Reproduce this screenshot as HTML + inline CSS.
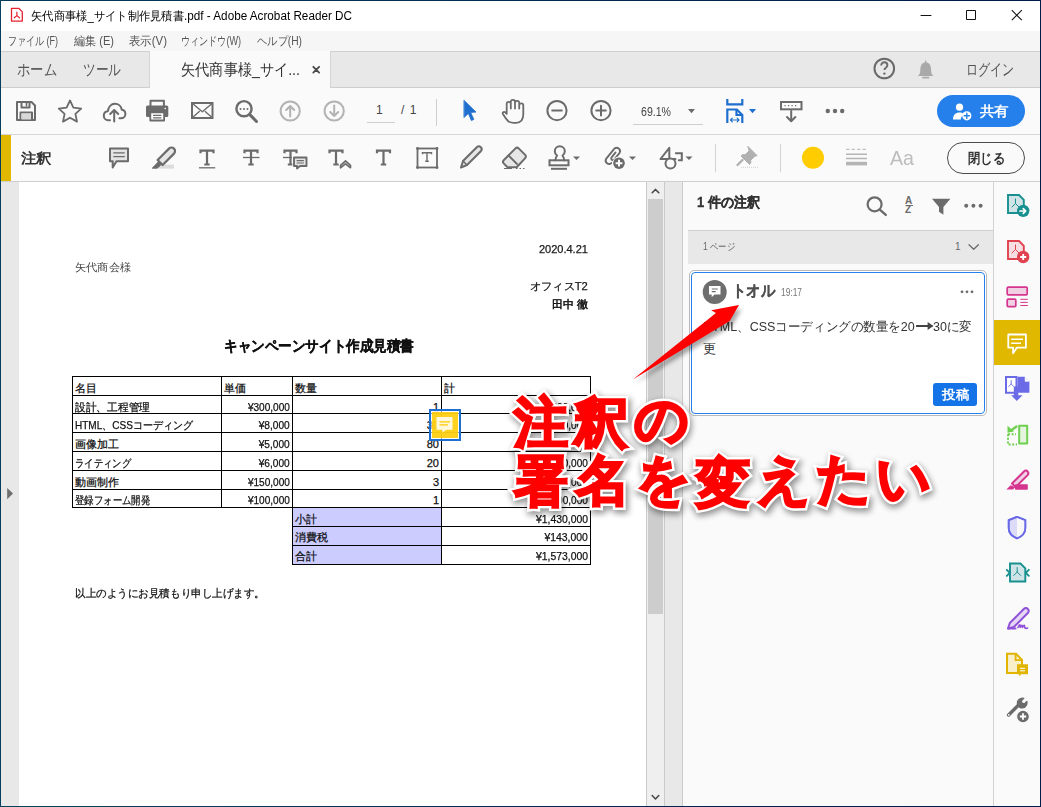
<!DOCTYPE html>
<html><head><meta charset="utf-8">
<style>
*{box-sizing:border-box;margin:0;padding:0}
html,body{width:1041px;height:807px;overflow:hidden;background:#fff}
body{position:relative;font-family:"Liberation Sans",sans-serif;color:#222}
.a{position:absolute;white-space:nowrap;line-height:1}
.b{position:absolute}
#ov{position:absolute;left:0;top:0;z-index:10}
.menu{font-size:12px;color:#555;top:35px}
.tabt{font-size:16px;color:#555;top:62px}
.doc{font-size:11px;color:#111;-webkit-text-stroke:0.25px #111}
.tl{position:absolute;background:#000}
.rt{position:absolute;white-space:nowrap;line-height:1;font-size:54px;font-weight:normal;-webkit-text-stroke-linejoin:round}
</style></head><body>

<!-- ============ backgrounds ============ -->
<div class="b" style="left:0;top:0;width:1041px;height:31px;background:#fff"></div>
<div class="b" style="left:0;top:31px;width:1041px;height:20px;background:#f6f6f6"></div>
<div class="b" style="left:0;top:51px;width:1041px;height:1px;background:#cfcfcf"></div>
<div class="b" style="left:0;top:52px;width:1041px;height:35px;background:#e8e8e8"></div>
<div class="b" style="left:0;top:87px;width:1041px;height:1px;background:#cdcdcd"></div>
<div class="b" style="left:0;top:88px;width:1041px;height:46px;background:#fafafa"></div>
<div class="b" style="left:0;top:134px;width:1041px;height:1px;background:#d6d6d6"></div>
<div class="b" style="left:0;top:135px;width:1041px;height:46px;background:#fafafa"></div>
<div class="b" style="left:0;top:181px;width:1041px;height:1px;background:#cfcfcf"></div>
<!-- active tab -->
<div class="b" style="left:149px;top:51px;width:182px;height:37px;background:#fafafa;border-left:1px solid #d4d4d4;border-right:1px solid #d4d4d4"></div>
<!-- yellow comment bar -->
<div class="b" style="left:1px;top:135px;width:10px;height:46px;background:#e0b800"></div>

<!-- doc area -->
<div class="b" style="left:0;top:182px;width:19px;height:625px;background:#e8e8e8"></div>
<div class="b" style="left:19px;top:182px;width:627px;height:625px;background:#fff"></div>
<div class="b" style="left:646px;top:182px;width:1px;height:625px;background:#cacaca"></div>
<div class="b" style="left:647px;top:182px;width:17px;height:625px;background:#efefef"></div>
<div class="b" style="left:648px;top:199px;width:15px;height:415px;background:#cdcdcd"></div>
<div class="b" style="left:664px;top:182px;width:1px;height:625px;background:#cacaca"></div>
<div class="b" style="left:665px;top:182px;width:17px;height:625px;background:#e8e8e8"></div>
<div class="b" style="left:682px;top:182px;width:1px;height:625px;background:#cacaca"></div>
<div class="b" style="left:683px;top:182px;width:310px;height:625px;background:#fafafa"></div>
<div class="b" style="left:993px;top:182px;width:1px;height:625px;background:#d2d2d2"></div>
<div class="b" style="left:994px;top:182px;width:47px;height:625px;background:#fafafa"></div>
<div class="b" style="left:994px;top:320px;width:46px;height:45px;background:#e0b800"></div>

<!-- comments panel -->
<div class="b" style="left:688px;top:230px;width:305px;height:1px;background:#cfcfcf"></div>
<div class="b" style="left:688px;top:231px;width:305px;height:33px;background:#e8e8e8"></div>
<div class="b" style="left:689px;top:270px;width:298px;height:146px;border:1px solid #bababa;border-radius:5px;background:#fff"></div>
<div class="b" style="left:691px;top:272px;width:294px;height:142px;border:1px solid #2680eb;border-radius:4px;background:#fff"></div>
<div class="b" style="left:933px;top:383px;width:44px;height:23px;border-radius:3px;background:#1473e6"></div>

<!-- buttons -->
<div class="b" style="left:937px;top:95px;width:88px;height:32px;border-radius:16px;background:#2680eb"></div>
<div class="b" style="left:947px;top:142px;width:78px;height:32px;border-radius:16px;border:1px solid #4b4b4b;background:#fafafa"></div>

<!-- ============ texts ============ -->
<div class="a" style="left: 30.5px; top: 10px; font-size: 12px; color: rgb(0, 0, 0); transform: scaleX(0.9405); transform-origin: left top;">矢代商事様_サイト制作見積書</div><div class="a" style="left: 184px; top: 10px; font-size: 12.5px; color: rgb(0, 0, 0); transform: scaleX(0.9371); transform-origin: left top;">.pdf - Adobe Acrobat Reader DC</div>
<div class="a menu" style="left: 8px; transform: scaleX(0.7501); transform-origin: left top;">ファイル (F)</div>
<div class="a menu" style="left: 73.5px; transform: scaleX(0.9229); transform-origin: left top;">編集 (E)</div>
<div class="a menu" style="left: 128.5px; transform: scaleX(0.95); transform-origin: left top;">表示(V)</div>
<div class="a menu" style="left: 181px; transform: scaleX(0.7564); transform-origin: left top;">ウィンドウ(W)</div>
<div class="a menu" style="left: 256.5px; transform: scaleX(0.8543); transform-origin: left top;">ヘルプ(H)</div>

<div class="a tabt" style="left: 16.5px; transform: scaleX(0.8333); transform-origin: left top;">ホーム</div>
<div class="a tabt" style="left: 82.5px; transform: scaleX(0.7917); transform-origin: left top;">ツール</div>
<div class="a tabt" style="left: 180.5px; color: rgb(51, 51, 51); transform: scaleX(0.8865); transform-origin: left top;">矢代商事様_サイ...</div>
<div class="a" style="left: 966px; top: 62px; font-size: 16px; color: rgb(85, 85, 85); transform: scaleX(0.75); transform-origin: left top;">ログイン</div>

<div class="a" style="left:376px;top:104px;font-size:12px;color:#444">1</div>
<div class="a" style="left:401px;top:104px;font-size:12px;color:#444;word-spacing:2px">/ 1</div>
<div class="a" style="left: 641px; top: 105.5px; font-size: 12px; color: rgb(68, 68, 68); transform: scaleX(0.8815); transform-origin: left top;">69.1%</div>
<div class="a" style="left: 979.5px; top: 104px; font-size: 14px; font-weight: bold; color: rgb(255, 255, 255); transform: scaleX(1.0357); transform-origin: left top;">共有</div>

<div class="a" style="left: 21px; top: 151px; font-size: 14px; font-weight: bold; color: rgb(51, 51, 51); transform: scaleX(1.1071); transform-origin: left top;">注釈</div>
<div class="a" style="left: 889.5px; top: 147px; font-size: 21px; color: rgb(189, 189, 189); transform: scaleX(0.9343); transform-origin: left top;">Aa</div>
<div class="a" style="left: 968px; top: 151px; font-size: 14px; font-weight: bold; color: rgb(51, 51, 51); transform: scaleX(0.881); transform-origin: left top;">閉じる</div>

<!-- panel texts -->
<div class="a" style="left: 696.5px; top: 195px; font-size: 14px; font-weight: bold; color: rgb(51, 51, 51); -webkit-text-stroke: 0.3px rgb(51, 51, 51); transform: scaleX(0.9307); transform-origin: left top;">1 件の注釈</div>
<div class="a" style="left: 703px; top: 242px; font-size: 10px; color: rgb(102, 102, 102); transform: scaleX(0.8346); transform-origin: left top;">1 ページ</div>
<div class="a" style="left:955px;top:242px;font-size:10px;color:#666">1</div>
<div class="a" style="left: 732px; top: 283px; font-size: 16px; font-weight: bold; color: rgb(80, 80, 80); -webkit-text-stroke: 0.2px rgb(80, 80, 80); transform: scaleX(0.8958); transform-origin: left top;">トオル</div>
<div class="a" style="left: 781px; top: 288px; font-size: 10px; color: rgb(119, 119, 119); transform: scaleX(0.839); transform-origin: left top;">19:17</div>
<div class="a" style="left: 703px; top: 320px; font-size: 13px; color: rgb(51, 51, 51); transform: scaleX(0.964); transform-origin: left top;">HTML、CSSコーディングの数量を20<span style="display:inline-block;width:17px;height:2px;background:#444;vertical-align:4px;margin:0 1px;position:relative"><span style="position:absolute;right:-1px;top:-3px;border-left:6px solid #444;border-top:4px solid transparent;border-bottom:4px solid transparent"></span></span>30に変</div>
<div class="a" style="left: 703px; top: 342px; font-size: 13px; color: rgb(51, 51, 51); transform: scaleX(1); transform-origin: left top;">更</div>
<div class="a" style="left: 942px; top: 388px; font-size: 13px; font-weight: bold; color: rgb(255, 255, 255); transform: scaleX(1.0385); transform-origin: left top;">投稿</div>

<!-- ============ document ============ -->
<div class="a doc r" style="right: 453px; top: 244px; color: rgb(34, 34, 34); transform: scaleX(1.0013); transform-origin: right top;">2020.4.21</div>
<div class="a doc" style="left: 75px; top: 262px; color: rgb(68, 68, 68); -webkit-text-stroke: 0px; transform: scaleX(1.0182); transform-origin: left top;">矢代商会様</div>
<div class="a doc r" style="right: 453px; top: 281px; color: rgb(34, 34, 34); transform: scaleX(1.0203); transform-origin: right top;">オフィスT2</div>
<div class="a doc r" style="right: 453px; top: 299px; color: rgb(17, 17, 17); -webkit-text-stroke: 0.5px rgb(17, 17, 17); transform: scaleX(0.9983); transform-origin: right top;">田中 徹</div>
<div class="a" style="left: 223.5px; top: 338px; font-size: 15px; font-weight: bold; color: rgb(17, 17, 17); -webkit-text-stroke: 0.3px rgb(17, 17, 17); transform: scaleX(0.9048); transform-origin: left top;">キャンペーンサイト作成見積書</div>

<!-- table lines -->
<div class="tl" style="left:72px;top:376px;width:519px;height:1px"></div>
<div class="tl" style="left:72px;top:395px;width:519px;height:1px"></div>
<div class="tl" style="left:72px;top:413px;width:519px;height:1px"></div>
<div class="tl" style="left:72px;top:432px;width:519px;height:1px"></div>
<div class="tl" style="left:72px;top:451px;width:519px;height:1px"></div>
<div class="tl" style="left:72px;top:470px;width:519px;height:1px"></div>
<div class="tl" style="left:72px;top:489px;width:519px;height:1px"></div>
<div class="tl" style="left:72px;top:507px;width:519px;height:1px"></div>
<div class="b" style="left:293px;top:508px;width:148px;height:18px;background:#ccccff"></div>
<div class="b" style="left:293px;top:527px;width:148px;height:18px;background:#ccccff"></div>
<div class="b" style="left:293px;top:546px;width:148px;height:18px;background:#ccccff"></div>
<div class="tl" style="left:292px;top:526px;width:299px;height:1px"></div>
<div class="tl" style="left:292px;top:545px;width:299px;height:1px"></div>
<div class="tl" style="left:292px;top:564px;width:299px;height:1px"></div>
<div class="tl" style="left:72px;top:376px;width:1px;height:132px"></div>
<div class="tl" style="left:221px;top:376px;width:1px;height:132px"></div>
<div class="tl" style="left:292px;top:376px;width:1px;height:189px"></div>
<div class="tl" style="left:441px;top:376px;width:1px;height:189px"></div>
<div class="tl" style="left:590px;top:376px;width:1px;height:189px"></div>

<!-- table text -->
<div class="a doc" style="left:75px;top:383px">名目</div>
<div class="a doc" style="left:224px;top:383px">単価</div>
<div class="a doc" style="left:295px;top:383px">数量</div>
<div class="a doc" style="left:444px;top:383px">計</div>

<div class="a doc" style="left: 75px; top: 402px; transform: scaleX(0.974); transform-origin: left top;">設計、工程管理</div>
<div class="a doc" style="left: 75px; top: 420px; transform: scaleX(0.9108); transform-origin: left top;">HTML、CSSコーディング</div>
<div class="a doc" style="left: 75px; top: 439px; transform: scaleX(1); transform-origin: left top;">画像加工</div>
<div class="a doc" style="left: 75px; top: 458px; transform: scaleX(0.8485); transform-origin: left top;">ライティング</div>
<div class="a doc" style="left: 75px; top: 477px; transform: scaleX(1); transform-origin: left top;">動画制作</div>
<div class="a doc" style="left: 75px; top: 495px; transform: scaleX(0.8523); transform-origin: left top;">登録フォーム開発</div>

<div class="a doc r" style="right: 751px; top: 402px; transform: scaleX(0.9152); transform-origin: right top;">¥300,000</div>
<div class="a doc r" style="right: 751px; top: 420px; transform: scaleX(0.9211); transform-origin: right top;">¥8,000</div>
<div class="a doc r" style="right: 751px; top: 439px; transform: scaleX(0.9211); transform-origin: right top;">¥5,000</div>
<div class="a doc r" style="right: 751px; top: 458px; transform: scaleX(0.9211); transform-origin: right top;">¥6,000</div>
<div class="a doc r" style="right: 751px; top: 477px; transform: scaleX(0.9152); transform-origin: right top;">¥150,000</div>
<div class="a doc r" style="right: 751px; top: 495px; transform: scaleX(0.9152); transform-origin: right top;">¥100,000</div>

<div class="a doc r" style="right:602px;top:402px">1</div>
<div class="a doc r" style="right:602px;top:420px">30</div>
<div class="a doc r" style="right:602px;top:439px">80</div>
<div class="a doc r" style="right:602px;top:458px">20</div>
<div class="a doc r" style="right:602px;top:477px">3</div>
<div class="a doc r" style="right:602px;top:495px">1</div>

<div class="a doc r" style="right: 453px; top: 402px; transform: scaleX(0.9152); transform-origin: right top;">¥300,000</div>
<div class="a doc r" style="right: 453px; top: 420px; transform: scaleX(0.9152); transform-origin: right top;">¥240,000</div>
<div class="a doc r" style="right: 453px; top: 439px; transform: scaleX(0.9152); transform-origin: right top;">¥400,000</div>
<div class="a doc r" style="right: 453px; top: 458px; transform: scaleX(0.9152); transform-origin: right top;">¥120,000</div>
<div class="a doc r" style="right: 453px; top: 477px; transform: scaleX(0.9152); transform-origin: right top;">¥450,000</div>
<div class="a doc r" style="right: 453px; top: 495px; transform: scaleX(0.9152); transform-origin: right top;">¥100,000</div>

<div class="a doc" style="left:295px;top:514px">小計</div>
<div class="a doc" style="left:295px;top:532px">消費税</div>
<div class="a doc" style="left:295px;top:551px">合計</div>
<div class="a doc r" style="right: 453px; top: 514px; transform: scaleX(0.9444); transform-origin: right top;">¥1,430,000</div>
<div class="a doc r" style="right: 453px; top: 532px; transform: scaleX(0.9479); transform-origin: right top;">¥143,000</div>
<div class="a doc r" style="right: 453px; top: 551px; transform: scaleX(0.9444); transform-origin: right top;">¥1,573,000</div>

<div class="a doc" style="left: 74.5px; top: 588px; transform: scaleX(0.9596); transform-origin: left top;">以上のようにお見積もり申し上げます。</div>

<!-- annotation -->
<div class="b" style="left:429px;top:409px;width:32px;height:32px;border:2px solid #1f6fd0;background:rgba(255,255,255,.6)"></div>
<div class="b" style="left:432px;top:412px;width:26px;height:26px;background:rgba(255,204,0,.88)"></div>

<!--ICONS-->
<svg id="ov" width="1041" height="807" viewBox="0 0 1041 807" style="position:absolute;left:0;top:0">
<g fill="none" stroke-linecap="round" stroke-linejoin="round">
<!-- title bar -->
<path d="M11.5 8.3h7.2l3.6 3.6v9.2h-10.8z" stroke="#e8212e" stroke-width="1.3"></path>
<path d="M16.9 12.2v3.4M16.9 15.6l-2.6 2.2M16.9 15.6l2.6 2.2" stroke="#e8212e" stroke-width="1.2"></path>
<path d="M921 15.5h10" stroke="#111" stroke-width="1"></path>
<rect x="966.5" y="10.5" width="9" height="9" stroke="#111" stroke-width="1" stroke-linecap="butt"></rect>
<path d="M1011.8 10.2l10 10M1021.8 10.2l-10 10" stroke="#111" stroke-width="1.05" stroke-linecap="butt"></path>
<!-- tab bar -->
<path d="M313.3 66.8l5.8 5.8M319.1 66.8l-5.8 5.8" stroke="#4a4a4a" stroke-width="1.8"></path>
<circle cx="884.3" cy="68.5" r="9.8" stroke="#6a6a6a" stroke-width="2"></circle>
<path d="M881.2 65.5c0-2 1.4-3.2 3.1-3.2s3.1 1.2 3.1 3c0 2.4-3 2.4-3 4.8" stroke="#6a6a6a" stroke-width="1.9" stroke-linecap="butt"></path>
<circle cx="884.4" cy="73.6" r="1.2" fill="#6a6a6a"></circle>
<path d="M918 76c1.8-1.5 2.3-3 2.3-6.5c0-4 1.8-6.5 4.8-7.2v-1.3c0-1 1.2-1 1.2 0v1.3c3 .7 4.8 3.2 4.8 7.2c0 3.5.5 5 2.3 6.5z" fill="#a9a9a9"></path>
<path d="M923 77.6h5.5" stroke="#a9a9a9" stroke-width="1.8"></path>
<!-- main toolbar -->
<g stroke="#6b6b6b" stroke-width="2">
<path d="M17 102h14.5l3.5 3.5v14.5h-18z"></path>
<path d="M21.5 102v5.5h8v-5.5"></path>
<path d="M20.5 120v-7.5h11.5v7.5"></path>
</g>
<rect x="21.5" y="113.5" width="9.5" height="6" fill="#d8d8d8"></rect>
<path d="M26.5 103.3v2.5" stroke="#6b6b6b" stroke-width="1.6"></path>
<path d="M70 100.5l3.4 7.2l7.8.9l-5.8 5.3l1.6 7.7l-7-3.9l-7 3.9l1.6-7.7l-5.8-5.3l7.8-.9z" stroke="#6b6b6b" stroke-width="1.8"></path>
<path d="M110 120.2h-1.8c-2.6 0-4.4-2-4.4-4.5c0-2.4 1.8-4.3 4.1-4.5c.5-4.2 3.3-7.4 7-7.4c3.6 0 6.4 2.6 6.9 6c2.1.3 3.6 2.1 3.6 4.2c0 2.3-1.9 4.2-4.4 4.2h-1.6" stroke="#6b6b6b" stroke-width="2"></path>
<path d="M114.2 121.5v-11M110.2 114l4-4l4 4" stroke="#6b6b6b" stroke-width="2"></path>
<path d="M150.5 106v-5.2h13.4v5.2" stroke="#6b6b6b" stroke-width="2"></path>
<rect x="146" y="105.5" width="22.3" height="11.5" rx="1.6" fill="#6b6b6b"></rect>
<rect x="150.3" y="112.3" width="13.8" height="8.2" fill="#fff" stroke="#6b6b6b" stroke-width="1.8"></rect>
<path d="M153.5 115.3h7.5M153.5 117.8h7.5" stroke="#6b6b6b" stroke-width="1.2"></path>
<circle cx="165.2" cy="108.5" r=".8" fill="#fff"></circle>
<rect x="192" y="103" width="20.5" height="15" stroke="#6b6b6b" stroke-width="2" stroke-linejoin="miter"></rect>
<path d="M192.5 103.5l9.8 8.2l9.8-8.2M192.5 117.5l6.8-6M212 117.5l-6.8-6" stroke="#6b6b6b" stroke-width="1.4"></path>
<circle cx="244" cy="108.7" r="7.6" stroke="#6b6b6b" stroke-width="2.4"></circle>
<path d="M249.8 114.6l6.7 6.9" stroke="#6b6b6b" stroke-width="3"></path>
<circle cx="240.5" cy="108.9" r="1" fill="#6b6b6b"></circle><circle cx="244" cy="108.9" r="1" fill="#6b6b6b"></circle><circle cx="247.5" cy="108.9" r="1" fill="#6b6b6b"></circle>
<g stroke="#b3b3b3" stroke-width="2">
<circle cx="290.2" cy="111" r="9.6"></circle>
<path d="M290.2 116.5v-10.5M286.2 110l4-4l4 4"></path>
<circle cx="334.2" cy="111" r="9.6"></circle>
<path d="M334.2 105.5v10.5M330.2 112l4 4l4-4"></path>
</g>
<path d="M464.2 100.5l11.8 11.6l-5.3.3l3.1 7l-2.4 1.2l-3-7.1l-4.2 3.8z" fill="#1f6fcf" stroke="#1f6fcf" stroke-width=".8"></path>
<path d="M508.5 121.5c-2-2-4.2-5.2-5.6-7.5c-.8-1.4.9-2.8 2.2-1.8l1.6 1.6v-9.8a2.05 2.05 0 0 1 4.1 0v4.5v-6.6a2.1 2.1 0 0 1 4.2 0v6.6v-5.6a2.1 2.1 0 0 1 4.2 0v5.6v-3a2.05 2.05 0 0 1 4.1 0v8.5c0 5.8-2.8 8.8-7.2 8.8h-2.2c-2 0-3.6-.4-5.4-1.3z" stroke="#6b6b6b" stroke-width="1.8"></path>
<g stroke="#6b6b6b" stroke-width="2">
<circle cx="557" cy="110.6" r="9.6"></circle>
<path d="M552.2 110.6h9.6"></path>
<circle cx="601" cy="110.6" r="9.6"></circle>
<path d="M596.2 110.6h9.6M601 105.8v9.6"></path>
</g>
<path d="M633 124.5h70M367 122.5h28" stroke="#cfcfcf" stroke-width="1" stroke-linecap="butt"></path>
<path d="M688 109h7l-3.5 4.2z" fill="#6b6b6b"></path>
<path d="M436.5 99v27" stroke="#d0d0d0" stroke-width="1" stroke-linecap="butt"></path>
<g stroke="#1f6fcf" stroke-width="2.2" stroke-linecap="butt" stroke-linejoin="miter">
<path d="M727.3 99v5.3h15v-5.3"></path>
<path d="M727.3 123v-13.5h9.5l5.5 5.5v8"></path>
<path d="M736.5 109.5v5.5h5.8"></path>
</g>
<path d="M730.5 120h8.5M732.3 118.2l-1.8 1.8l1.8 1.8M737.2 118.2l1.8 1.8l-1.8 1.8" stroke="#1f6fcf" stroke-width="1.2"></path>
<path d="M749 109h7l-3.5 4.2z" fill="#1f6fcf"></path>
<rect x="781" y="102" width="20.5" height="7.3" stroke="#6b6b6b" stroke-width="2" stroke-linejoin="miter"></rect>
<path d="M784.5 105.6h1.2M788 105.6h1.2M791.5 105.6h1.2M795 105.6h1.2" stroke="#6b6b6b" stroke-width="1.4" stroke-linecap="butt"></path>
<path d="M791.2 111v10M787 117l4.2 4.2l4.2-4.2" stroke="#6b6b6b" stroke-width="2"></path>
<circle cx="827.8" cy="111" r="2.2" fill="#6b6b6b"></circle><circle cx="835" cy="111" r="2.2" fill="#6b6b6b"></circle><circle cx="842.2" cy="111" r="2.2" fill="#6b6b6b"></circle>
<!-- share person -->
<circle cx="959.5" cy="107.2" r="3.6" fill="#fff"></circle>
<path d="M953 119.5c0-4.5 2.6-7 6.5-7c2 0 3.5.6 4.6 1.8c-2 1-3.3 3-3.3 5.2z" fill="#fff"></path>
<circle cx="966.8" cy="115.8" r="4.6" fill="#fff"></circle>
<path d="M964.2 115.8h5.2M966.8 113.2v5.2" stroke="#2680eb" stroke-width="1.4"></path>
</g>
</svg>
<svg width="1041" height="807" viewBox="0 0 1041 807" style="position:absolute;left:0;top:0;z-index:11">
<g fill="none" stroke-linecap="round" stroke-linejoin="round">
<!-- comment toolbar -->
<path d="M110 148.5h18v12.8h-11.5l-3.8 6.2v-6.2h-2.7z" fill="#e4e4e4" stroke="#6b6b6b" stroke-width="2"></path>
<path d="M113.8 152.8h10.5M113.8 156.6h10.5" stroke="#6b6b6b" stroke-width="1.3"></path>
<path d="M158 164.6h16v4h-16z" fill="#dcdcdc"></path>
<path d="M157.6 160L169 148.6A3.5 3.5 0 0 1 174 153.6L162.6 165z" fill="#e6e6e6" stroke="#6b6b6b" stroke-width="2.2"></path>
<path d="M159 161.5l-1.8 1.8l2.4 2.4l1.8-1.8z M157.2 163.3l-4.6 4.8h4.4l2.6-2.4z" fill="#6b6b6b" stroke="#6b6b6b" stroke-width="1.2"></path>
<g stroke="#6b6b6b" stroke-linecap="butt" stroke-linejoin="miter">
<path d="M200.5 153.3v-2.7h13v2.7M207 150.8v14M204.3 164.5h5.4" stroke-width="2.2"></path>
<path d="M199 167.8h16.2" stroke-width="1.3"></path>
<path d="M244.5 153.3v-2.7h13v2.7M251 150.8v14M248.3 164.5h5.4" stroke-width="2.2"></path>
<path d="M243 157.5h16.5" stroke-width="1.3"></path>
<path d="M284.5 153.3v-2.7h12v2.7M290.5 150.8v14M287.8 164.5h4.5" stroke-width="2.2"></path>
<path d="M283 157.5h9" stroke-width="1.3"></path>
<path d="M329.5 153.3v-2.7h13v2.7M336 150.8v14M333.3 164.5h5.4" stroke-width="2.2"></path>
<path d="M377 153.3v-2.7h13v2.7M383.5 150.8v14M380.8 164.5h5.4" stroke-width="2.2"></path>
<rect x="417.5" y="148.5" width="19.5" height="19" stroke-width="1.8"></rect>
<path d="M422.5 154.3v-1.5h9v1.5M427 152.8v8.5M425.2 161.3h3.6" stroke-width="1.4"></path>
</g>
<circle cx="417.5" cy="148.5" r="1.4" fill="#6b6b6b"></circle><circle cx="437" cy="148.5" r="1.4" fill="#6b6b6b"></circle><circle cx="417.5" cy="167.5" r="1.4" fill="#6b6b6b"></circle><circle cx="437" cy="167.5" r="1.4" fill="#6b6b6b"></circle>
<path d="M294 157.5h12.5v8.5h-6.5l-3 2.5v-2.5h-3z" fill="#e4e4e4" stroke="#6b6b6b" stroke-width="1.9"></path>
<path d="M297 160.6h6.5M297 163h6.5" stroke="#6b6b6b" stroke-width="1.1"></path>
<path d="M340.5 167.8v-2.5l5-4.5l5 4.5v2.5l-5-4z" fill="#d0d0d0" stroke="#6b6b6b" stroke-width="1.6"></path>
<path d="M461 167.5l2-6.5l13.8-13.8c1.1-1.1 2.9-1.1 4 0s1.1 2.9 0 4l-13.8 13.8z" fill="#e6e6e6" stroke="#6b6b6b" stroke-width="2"></path>
<path d="M463 161l4 4" stroke="#6b6b6b" stroke-width="1.6"></path>
<path d="M507.5 167.2l-3.8-3.8c-.9-.9-.9-2.3 0-3.2l11.8-11.8c.9-.9 2.3-.9 3.2 0l6.5 6.5c.9.9.9 2.3 0 3.2l-8.5 9.1z" fill="#e6e6e6" stroke="#6b6b6b" stroke-width="2"></path>
<path d="M508.5 155.5l8.5 8.5" stroke="#6b6b6b" stroke-width="1.8"></path>
<path d="M504 168.5h8M516 168.5h1.5M519.5 168.5h1.5M523 168.5h1.5" stroke="#6b6b6b" stroke-width="1" stroke-linecap="butt"></path>
<g stroke="#6b6b6b" stroke-width="2">
<path d="M555.3 160.3c.2-2.2.8-3.5 1.8-4.8c-1.5-1-2.3-2.5-2.3-4.3c0-2.8 2.3-5 5-5s5 2.2 5 5c0 1.8-.8 3.3-2.3 4.3c1 1.3 1.6 2.6 1.8 4.8"></path>
<rect x="549.5" y="160.3" width="19" height="5" stroke-linejoin="miter"></rect>
<path d="M551 168.8h16" stroke-linecap="butt"></path>
</g>
<path d="M573 156.6h7l-3.5 3.4z" fill="#6b6b6b"></path>
<path d="M611.3 163.1A3.4 3.4 0 0 1 606.1 158.9L614.4 148.6A3.4 3.4 0 0 1 619.6 152.8L614.2 159.5A1.7 1.7 0 0 1 611.6 157.3L615.6 152.4" stroke="#6b6b6b" stroke-width="1.9"></path>
<circle cx="619" cy="163.2" r="6.6" fill="#fafafa"></circle>
<circle cx="619" cy="163.2" r="5.8" fill="#6b6b6b"></circle>
<path d="M615.6 163.2h6.8M619 159.8v6.8" stroke="#fff" stroke-width="2" stroke-linecap="butt"></path>
<path d="M629 156.6h7l-3.5 3.4z" fill="#6b6b6b"></path>
<path d="M675.5 159h-15l8.8-11.2v11.2" stroke="#6b6b6b" stroke-width="2"></path>
<path d="M675.8 153.3h6v7h-3" stroke="#6b6b6b" stroke-width="2" stroke-linejoin="miter"></path>
<circle cx="670.5" cy="163.6" r="5" fill="#fafafa" stroke="#6b6b6b" stroke-width="2"></circle>
<path d="M685.5 156.6h7l-3.5 3.4z" fill="#6b6b6b"></path>
<path d="M715.5 144v28M780.5 144v28" stroke="#d2d2d2" stroke-width="1" stroke-linecap="butt"></path>
<path d="M748 146.5l9 9l-2.5 1l-3.8 3.8c.5 1.8 0 3.2-1.2 4.2l-8.5-8.5c1-1.2 2.4-1.7 4.2-1.2l3.8-3.8z" fill="#b0b0b0" stroke="#b0b0b0" stroke-width="1"></path>
<path d="M742.5 160l-5 5" stroke="#b0b0b0" stroke-width="2.3"></path>
<path d="M741 167.3h17" stroke="#cfcfcf" stroke-width="1" stroke-dasharray="1 1" stroke-linecap="butt"></path>
<circle cx="813" cy="157.7" r="11" fill="#ffcc00"></circle>
<path d="M846 149.3h3.5M851.5 149.3h3.5M857 149.3h3.5M862.5 149.3h3.5" stroke="#b5b5b5" stroke-width="1" stroke-linecap="butt"></path>
<path d="M846 154.3h21M846 158.5h21" stroke="#b5b5b5" stroke-width="1.6" stroke-linecap="butt"></path>
<path d="M846 163.6h21" stroke="#b5b5b5" stroke-width="3.6" stroke-linecap="butt"></path>
<!-- panel header icons -->
<circle cx="874.6" cy="204.3" r="7" stroke="#6b6b6b" stroke-width="2.2"></circle>
<path d="M879.8 209.6l6 5.3" stroke="#6b6b6b" stroke-width="2.4"></path>
<path d="M932 198.8h18.4l-7 8.2v7.8l-4.4-3v-4.8z" fill="#6b6b6b"></path>
<circle cx="966.2" cy="205.8" r="2" fill="#6b6b6b"></circle><circle cx="973.4" cy="205.8" r="2" fill="#6b6b6b"></circle><circle cx="980.6" cy="205.8" r="2" fill="#6b6b6b"></circle>
<path d="M969 244.8l4.7 4.4l4.7-4.4" stroke="#6b6b6b" stroke-width="1.3"></path>
<circle cx="714.7" cy="292" r="12" fill="#6e6e6e"></circle>
<path d="M709 286h11.5v8.5h-6l-2.8 2.8v-2.8h-2.7z" fill="#fff"></path>
<path d="M711.8 289h6M711.8 291.6h4" stroke="#6e6e6e" stroke-width="1.1" stroke-linecap="butt"></path>
<circle cx="962" cy="291.8" r="1.4" fill="#6b6b6b"></circle><circle cx="967" cy="291.8" r="1.4" fill="#6b6b6b"></circle><circle cx="972" cy="291.8" r="1.4" fill="#6b6b6b"></circle>
<!-- doc left arrow -->
<path d="M7.2 488v11.2l5.8-5.6z" fill="#6e6e6e"></path>
<!-- scroll arrows -->
<path d="M652.2 192.8l3.3-3.4l3.3 3.4" stroke="#444" stroke-width="1.5"></path>
<path d="M652.2 795.5l3.3 3.4l3.3-3.4" stroke="#444" stroke-width="1.5"></path>
</g>
</svg>
<svg width="1041" height="807" viewBox="0 0 1041 807" style="position:absolute;left:0;top:0;z-index:12">
<g fill="none" stroke-linecap="round" stroke-linejoin="round">
<!-- right strip -->
<path d="M1008 195h11l4.8 4.8v13.2h-15.8z" fill="#d0e4e8" stroke="#17908f" stroke-width="1.9" stroke-linejoin="miter"></path>
<path d="M1015.5 199v4.5l-3.5 3.5M1015.5 203.5l3.5 3.5" stroke="#17908f" stroke-width="1"></path>
<circle cx="1023.2" cy="210.9" r="6.2" fill="#17908f"></circle>
<path d="M1020 211h5.5M1023.3 208.6l2.4 2.4l-2.4 2.4" stroke="#fff" stroke-width="1.7"></path>
<path d="M1008 241h11l4.8 4.8v13.2h-15.8z" fill="#f6dfe2" stroke="#e0434f" stroke-width="1.9" stroke-linejoin="miter"></path>
<path d="M1015.5 245v4.5l-3.5 3.5M1015.5 249.5l3.5 3.5" stroke="#e0434f" stroke-width="1"></path>
<circle cx="1023.2" cy="257" r="6.2" fill="#e0434f"></circle>
<path d="M1020.2 257h6M1023.2 254v6" stroke="#fff" stroke-width="1.8" stroke-linecap="butt"></path>
<rect x="1007.2" y="287.2" width="20" height="7.6" rx="1" fill="#f2d0e3" stroke="#d6358f" stroke-width="1.7"></rect>
<rect x="1007.2" y="299.2" width="8.6" height="7.4" rx="1" fill="#f2d0e3" stroke="#d6358f" stroke-width="1.7"></rect>
<path d="M1020.3 299.3h7.5M1020.3 302.4h7.5M1020.3 305.5h7.5" stroke="#d6358f" stroke-width="1" stroke-linecap="butt"></path>
<path d="M1008.3 334.5h17.6v13.2h-9.2l-3.6 5.5v-5.5h-4.8z" stroke="#fff" stroke-width="1.8"></path>
<path d="M1011.2 339.2h11.8M1011.2 343.2h9.8" stroke="#fff" stroke-width="1.6" stroke-linecap="butt"></path>
<path d="M1006 377h10.5v15.8h-10.5z" fill="#fff" stroke="#6b6be8" stroke-width="2" stroke-linejoin="miter"></path>
<path d="M1017.5 376.8h7.5l4.4 4.4v11.6h-11.9z" fill="#6b6be8"></path>
<path d="M1011.2 380.5v3.5l-2.5 2.5M1011.2 384l2.5 2.5" stroke="#6b6be8" stroke-width=".9"></path>
<path d="M1013.8 386.5h4.5v8.8h4.2l-5.7 5.6l-5.7-5.6h2.7z" fill="#6b6be8"></path>
<path d="M1025.2 376.8v4.4h4.2" fill="#fff" stroke="#fff" stroke-width=".8"></path>
<rect x="1019.2" y="425.8" width="8" height="17.8" fill="#e5f4df" stroke="#6fcf4f" stroke-width="2"></rect>
<path d="M1008 434.2v10.2h9" stroke="#6fcf4f" stroke-width="2" stroke-dasharray="2 1.6" stroke-linecap="butt"></path>
<path d="M1008 434.2h8" stroke="#6fcf4f" stroke-width="2" stroke-dasharray="2 1.6" stroke-linecap="butt"></path>
<path d="M1016.5 426.5l-5.5 4" stroke="#6fcf4f" stroke-width="2.2"></path>
<path d="M1007.5 425.8l0 7l6.5 -1.2z" fill="#6fcf4f"></path>
<path d="M1012 483.5l12-12c1.2-1.2 2.8-1.2 3.6 0c.9.9.9 2.4 0 3.6l-12 12z" fill="#f2d0e3" stroke="#d6358f" stroke-width="2"></path>
<path d="M1010.6 485.2l-4.2 4.4h6.6l2.3-2.3z" fill="#d6358f"></path>
<rect x="1015" y="484.3" width="12.8" height="5.5" rx=".8" fill="#d6358f"></rect>
<path d="M1017 500"></path>
<path d="M1017 516.8l8.3 3.3v7.8c0 5-3.6 8.5-8.3 10.5c-4.7-2-8.3-5.5-8.3-10.5v-7.8z" fill="#dcdcf8" stroke="#6b6be8" stroke-width="1.8"></path>
<path d="M1017 517.5v20.5c4.2-2 7.6-5.3 7.6-10.1v-7.3z" fill="#f8f8f8"></path>
<path d="M1017 516.8l8.3 3.3v7.8c0 5-3.6 8.5-8.3 10.5c-4.7-2-8.3-5.5-8.3-10.5v-7.8z" stroke="#6b6be8" stroke-width="1.8"></path>
<path d="M1010 563.5h10.5l4.8 4.8v13.2h-15.3z" fill="#d0e4e8" stroke="#17908f" stroke-width="1.9" stroke-linejoin="miter"></path>
<path d="M1017.2 567.5v4.5l-3.5 3.5M1017.2 572l3.5 3.5" stroke="#17908f" stroke-width="1"></path>
<path d="M1006.8 569.8l3 3l-3 3M1028.8 569.8l-3 3l3 3" stroke="#17908f" stroke-width="1.9"></path>
<path d="M1008 628.5l1.8-5.5l14-14c1.2-1.2 3-1.2 4 0c1 1 1 2.8 0 4l-14 14z" fill="#e4d8f4" stroke="#9050d8" stroke-width="2"></path>
<path d="M1008 628.5h7.5" stroke="#9050d8" stroke-width="2"></path>
<path d="M1018 627.5c1.5-3.5 2.5-3.5 2.2 0c1.4-3 2.4-3 2.2 0c1.4-3 2.4-3 2.2 0c.8 1 1.6 1.2 3 .6" stroke="#9050d8" stroke-width="1.6"></path>
<path d="M1007 653.8h9l6 6v13.2h-15z" fill="#f8eec8" stroke="#e0b400" stroke-width="2" stroke-linejoin="miter"></path>
<path d="M1015.6 654v6.2h6.2" stroke="#e0b400" stroke-width="1.8" stroke-linejoin="miter"></path>
<path d="M1017 664.3h11v10h-7l-1.8 2.2v-2.2h-2.2z" fill="#e0b400"></path>
<path d="M1020 668.3h5M1020 670.8h5" stroke="#fff" stroke-width="1" stroke-linecap="butt"></path>
<path d="M1008.6 715l10-10" stroke="#6b6b6b" stroke-width="3.4"></path>
<path d="M1018 705.5c-1.2-2.8-.3-5.6 2.2-6.8c1.2-.6 2.4-.7 3.6-.4l-2.5 2.6l.8 2.2l2.2.8l2.6-2.5c.3 1.4.1 2.8-.6 4c-1.3 2.3-4 3-6.6 2z" fill="#6b6b6b" stroke="#6b6b6b" stroke-width="1.2"></path>
<circle cx="1008.8" cy="714.8" r=".9" fill="#fff"></circle>
<circle cx="1023" cy="716.5" r="6.4" fill="#6b6b6b" stroke="#f8f8f8" stroke-width="1.2"></circle>
<path d="M1019.8 716.5h6.4M1023 713.3v6.4" stroke="#fff" stroke-width="1.8" stroke-linecap="butt"></path>
</g>
</svg>
<div class="a" style="left:905px;top:196px;font-size:10px;font-weight:bold;color:#6b6b6b;line-height:9px">A<br>Z</div>
<div class="b" style="left:906px;top:205px;width:7px;height:1px;background:#6b6b6b"></div>

<!--/ICONS-->
<!--RED-->
<svg width="1041" height="807" viewBox="0 0 1041 807" style="position:absolute;left:0;top:0;z-index:20">
<defs><filter id="sh" x="-20%" y="-20%" width="140%" height="140%"><feGaussianBlur stdDeviation="2.2"></feGaussianBlur></filter></defs>
<path d="M436.5 417h16v12.8h-6.3l-3.8 3v-3h-5.9z" fill="#fff" fill-opacity=".85"></path>
<path d="M439.5 421.8h10.5M439.5 424.8h8.5" stroke="#ffcc00" stroke-width="1.3"></path>
<path d="M635 383.5L718 317.5L713.5 314.5L741.5 309L732 325.5z" fill="#000" fill-opacity=".35" filter="url(#sh)"></path>
<path d="M632.8 379.4L716 313L711.1 310.2L739 304.9L729.7 321z" fill="#ff0000"></path>
</svg>
<div style="position:absolute;left:0;top:0;z-index:21">
<div style="position:absolute;left:0;top:0;opacity:.42;filter:blur(3px);transform:translate(1.5px,2.5px)">
<div class="rt" style="left:514px;top:394.7px;color:#000;-webkit-text-stroke:10px #000">注</div>
<div class="rt" style="left:574.4px;top:394.7px;color:#000;-webkit-text-stroke:10px #000">釈</div>
<div class="rt" style="left:633.7px;top:391.8px;color:#000;-webkit-text-stroke:10px #000">の</div>
<div class="rt" style="left:513.7px;top:454.2px;color:#000;-webkit-text-stroke:10px #000">署</div>
<div class="rt" style="left:576.2px;top:452.9px;color:#000;-webkit-text-stroke:10px #000">名</div>
<div class="rt" style="left:635.6px;top:451.8px;color:#000;-webkit-text-stroke:10px #000">を</div>
<div class="rt" style="left:695.5px;top:456.2px;color:#000;-webkit-text-stroke:10px #000">変</div>
<div class="rt" style="left:756.4px;top:452.2px;color:#000;-webkit-text-stroke:10px #000">え</div>
<div class="rt" style="left:816.4px;top:451.2px;color:#000;-webkit-text-stroke:10px #000">た</div>
<div class="rt" style="left:875.6px;top:451.2px;color:#000;-webkit-text-stroke:10px #000">い</div>
</div>
<div class="rt" style="left:514px;top:394.7px;color:#fff;-webkit-text-stroke:9px #fff">注</div>
<div class="rt" style="left:574.4px;top:394.7px;color:#fff;-webkit-text-stroke:9px #fff">釈</div>
<div class="rt" style="left:633.7px;top:391.8px;color:#fff;-webkit-text-stroke:9px #fff">の</div>
<div class="rt" style="left:513.7px;top:454.2px;color:#fff;-webkit-text-stroke:9px #fff">署</div>
<div class="rt" style="left:576.2px;top:452.9px;color:#fff;-webkit-text-stroke:9px #fff">名</div>
<div class="rt" style="left:635.6px;top:451.8px;color:#fff;-webkit-text-stroke:9px #fff">を</div>
<div class="rt" style="left:695.5px;top:456.2px;color:#fff;-webkit-text-stroke:9px #fff">変</div>
<div class="rt" style="left:756.4px;top:452.2px;color:#fff;-webkit-text-stroke:9px #fff">え</div>
<div class="rt" style="left:816.4px;top:451.2px;color:#fff;-webkit-text-stroke:9px #fff">た</div>
<div class="rt" style="left:875.6px;top:451.2px;color:#fff;-webkit-text-stroke:9px #fff">い</div>
<div class="rt" style="left:514px;top:394.7px;color:#f00;-webkit-text-stroke:4.2px #f00">注</div>
<div class="rt" style="left:574.4px;top:394.7px;color:#f00;-webkit-text-stroke:4.2px #f00">釈</div>
<div class="rt" style="left:633.7px;top:391.8px;color:#f00;-webkit-text-stroke:4.2px #f00">の</div>
<div class="rt" style="left:513.7px;top:454.2px;color:#f00;-webkit-text-stroke:4.2px #f00">署</div>
<div class="rt" style="left:576.2px;top:452.9px;color:#f00;-webkit-text-stroke:4.2px #f00">名</div>
<div class="rt" style="left:635.6px;top:451.8px;color:#f00;-webkit-text-stroke:4.2px #f00">を</div>
<div class="rt" style="left:695.5px;top:456.2px;color:#f00;-webkit-text-stroke:4.2px #f00">変</div>
<div class="rt" style="left:756.4px;top:452.2px;color:#f00;-webkit-text-stroke:4.2px #f00">え</div>
<div class="rt" style="left:816.4px;top:451.2px;color:#f00;-webkit-text-stroke:4.2px #f00">た</div>
<div class="rt" style="left:875.6px;top:451.2px;color:#f00;-webkit-text-stroke:4.2px #f00">い</div>
</div>
<!--/RED-->

<div style="position:absolute;left:0;top:0;width:1041px;height:1px;background:linear-gradient(90deg,#033a5a,#01264f 60%,#001c48);z-index:60"></div>
<div style="position:absolute;left:0;top:806px;width:1041px;height:1px;background:linear-gradient(90deg,#05445f,#01264f 60%,#001c48);z-index:60"></div>
<div style="position:absolute;left:0;top:0;width:1px;height:807px;background:#043f5e;z-index:60"></div>
<div style="position:absolute;left:1040px;top:0;width:1px;height:807px;background:#001c48;z-index:60"></div>

</body></html>
